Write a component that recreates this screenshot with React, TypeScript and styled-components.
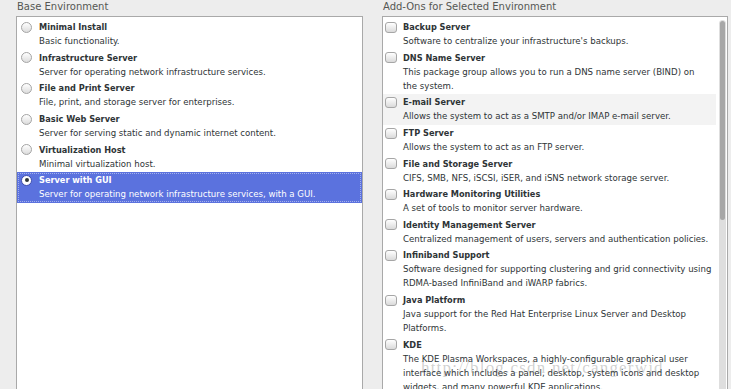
import React from "react";
import styled, { createGlobalStyle, css } from "styled-components";

const GlobalStyle = createGlobalStyle`
  html, body {
    margin: 0;
    padding: 0;
    background: #ededed;
    overflow: hidden;
  }
  body {
    font-family: "DejaVu Sans", "Noto Sans", sans-serif;
    color: #2e3436;
  }
`;

const Page = styled.div`
  position: relative;
  display: grid;
  grid-template-columns: 347px 346px;
  column-gap: 19px;
  padding: 0 3px 0 16px;
  height: 389px;
  overflow: hidden;
`;

const Section = styled.section`
  display: flex;
  flex-direction: column;
  min-width: 0;
`;

const Heading = styled.div`
  font-size: 10px;
  line-height: 13px;
  color: #555753;
  margin: 0 0 3px 1px;
  white-space: nowrap;
`;

const Panel = styled.div`
  display: flex;
  height: 380px;
  background: #ffffff;
  border: 1px solid #a9a9a9;
`;

const List = styled.div`
  flex: 1;
  min-width: 0;
  padding-top: 2px;
`;

const Row = styled.div<{ $selected?: boolean; $hover?: boolean; $pad: number }>`
  display: grid;
  grid-template-columns: 12px 1fr;
  column-gap: 6px;
  padding: 1.3px 0 1.3px ${(p) => p.$pad}px;
  ${(p) =>
    p.$hover &&
    css`
      background: #f3f3f3;
    `}
  ${(p) =>
    p.$selected &&
    css`
      background: #5b72de;
      color: #ffffff;
      outline: 1px dotted rgba(255, 255, 255, 0.45);
      outline-offset: -2px;
    `}
`;

const Text = styled.div`
  min-width: 0;
`;

const Title = styled.div`
  font-size: 8.2px;
  font-weight: bold;
  line-height: 14px;
  white-space: nowrap;
`;

const Desc = styled.div`
  font-size: 8.6px;
  line-height: 14px;
  white-space: nowrap;
`;

const Radio = styled.span<{ $on?: boolean }>`
  box-sizing: border-box;
  display: flex;
  align-items: center;
  justify-content: center;
  width: 11px;
  height: 11px;
  margin-top: 1.5px;
  border-radius: 50%;
  border: 1px solid #a4a4a4;
  background: linear-gradient(#ffffff, #dcdcdc);
  ${(p) =>
    p.$on &&
    css`
      border-color: #3d4cae;
      background: #ffffff;
      &::after {
        content: "";
        width: 4px;
        height: 4px;
        border-radius: 50%;
        background: #2e3436;
      }
    `}
`;

const Check = styled.span`
  box-sizing: border-box;
  display: block;
  width: 12px;
  height: 11px;
  margin-top: 1.5px;
  border-radius: 3px;
  border: 1px solid #a6a6a6;
  background: linear-gradient(#ffffff, #dadada);
`;

const Scrollbar = styled.div`
  width: 7px;
  margin: 3px 1px 0 3px;
  border-radius: 4px 4px 0 0;
  background: #dedede;
  padding: 1px;
  box-sizing: border-box;
`;

const Thumb = styled.div`
  height: 199px;
  border-radius: 3px;
  background: #a7a7a7;
`;

const Watermark = styled.div`
  position: absolute;
  left: 421px;
  top: 359px;
  font-family: "Liberation Serif", "DejaVu Serif", serif;
  font-size: 17px;
  letter-spacing: 1.2px;
  line-height: 18px;
  color: rgba(100, 100, 100, 0.3);
  white-space: nowrap;
  pointer-events: none;
`;

interface Item {
  title: string;
  desc: string[];
}

const environments: Item[] = [
  { title: "Minimal Install", desc: ["Basic functionality."] },
  { title: "Infrastructure Server", desc: ["Server for operating network infrastructure services."] },
  { title: "File and Print Server", desc: ["File, print, and storage server for enterprises."] },
  { title: "Basic Web Server", desc: ["Server for serving static and dynamic internet content."] },
  { title: "Virtualization Host", desc: ["Minimal virtualization host."] },
  { title: "Server with GUI", desc: ["Server for operating network infrastructure services, with a GUI."] },
];

const addOns: Item[] = [
  { title: "Backup Server", desc: ["Software to centralize your infrastructure's backups."] },
  {
    title: "DNS Name Server",
    desc: ["This package group allows you to run a DNS name server (BIND) on", "the system."],
  },
  { title: "E-mail Server", desc: ["Allows the system to act as a SMTP and/or IMAP e-mail server."] },
  { title: "FTP Server", desc: ["Allows the system to act as an FTP server."] },
  { title: "File and Storage Server", desc: ["CIFS, SMB, NFS, iSCSI, iSER, and iSNS network storage server."] },
  { title: "Hardware Monitoring Utilities", desc: ["A set of tools to monitor server hardware."] },
  {
    title: "Identity Management Server",
    desc: ["Centralized management of users, servers and authentication policies."],
  },
  {
    title: "Infiniband Support",
    desc: [
      "Software designed for supporting clustering and grid connectivity using",
      "RDMA-based InfiniBand and iWARP fabrics.",
    ],
  },
  {
    title: "Java Platform",
    desc: ["Java support for the Red Hat Enterprise Linux Server and Desktop", "Platforms."],
  },
  {
    title: "KDE",
    desc: [
      "The KDE Plasma Workspaces, a highly-configurable graphical user",
      "interface which includes a panel, desktop, system icons and desktop",
      "widgets, and many powerful KDE applications.",
    ],
  },
];

const App = () => {
  const selected = "Server with GUI";
  const hovered = "E-mail Server";

  return (
    <>
      <GlobalStyle />
      <Page>
        <Section>
          <Heading>Base Environment</Heading>
          <Panel>
            <List>
              {environments.map((env) => (
                <Row key={env.title} $pad={4} $selected={env.title === selected}>
                  <Radio $on={env.title === selected} />
                  <Text>
                    <Title>{env.title}</Title>
                    {env.desc.map((line) => (
                      <Desc key={line}>{line}</Desc>
                    ))}
                  </Text>
                </Row>
              ))}
            </List>
          </Panel>
        </Section>
        <Section>
          <Heading>Add-Ons for Selected Environment</Heading>
          <Panel>
            <List>
              {addOns.map((item) => (
                <Row key={item.title} $pad={2} $hover={item.title === hovered}>
                  <Check />
                  <Text>
                    <Title>{item.title}</Title>
                    {item.desc.map((line) => (
                      <Desc key={line}>{line}</Desc>
                    ))}
                  </Text>
                </Row>
              ))}
            </List>
            <Scrollbar>
              <Thumb />
            </Scrollbar>
          </Panel>
        </Section>
        <Watermark>http://blog.csdn.net/cangerwjd</Watermark>
      </Page>
    </>
  );
};

export default App;
